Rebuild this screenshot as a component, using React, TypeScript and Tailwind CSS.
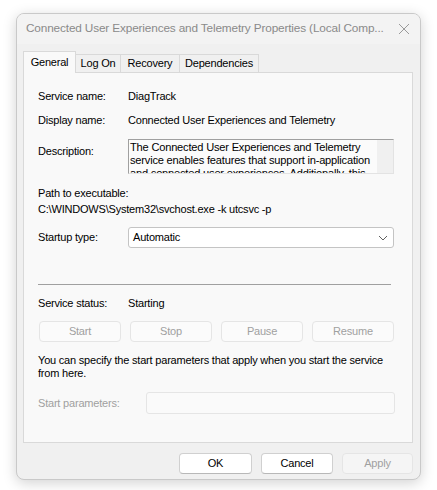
import React from "react";

const font = { fontFamily: '"Liberation Sans", Arial, sans-serif', letterSpacing: "-0.2px" };

function Tab({ label, w, selected }: { label: string; w: string; selected?: boolean }) {
  if (selected) {
    return (
      <div
        className={`${w} h-[22px] mb-[-1px] relative z-10 border border-b-0 border-[#d9d9d9] bg-[#f9f9f9] flex items-center justify-center text-black`}
      >
        {label}
      </div>
    );
  }
  return (
    <div
      className={`${w} h-[18px] border border-b-0 border-l-0 border-[#d9d9d9] bg-[#f0f0f0] flex items-center justify-center text-black`}
    >
      {label}
    </div>
  );
}

function SmallBtn({ label }: { label: string }) {
  return (
    <div className="w-[82px] h-[21px] rounded-[4px] border border-[#e5e5e5] bg-[#fbfbfb] flex items-center justify-center text-[#a0a0a0]">
      {label}
    </div>
  );
}

export default function App() {
  return (
    <div className="w-[437px] h-[490px] bg-white pt-[13px] pl-[16px] text-[11px] text-black" style={font}>
      <div className="w-[405px] h-[467px] rounded-[8px] border border-[#c9c9c9] bg-[#f0f0f0] shadow-[0_3px_14px_rgba(0,0,0,0.18)] flex flex-col overflow-hidden">
        {/* Title bar */}
        <div className="h-[30px] bg-[#f3f3f3] flex items-center pl-[9px] pr-[10px] shrink-0">
          <div className="flex-1 text-[11.8px] text-[#8a8a8a] whitespace-nowrap" style={{ letterSpacing: "-0.15px" }}>
            Connected User Experiences and Telemetry Properties (Local Comp...
          </div>
          <svg width="12" height="12" viewBox="0 0 12 12" className="ml-[4px] shrink-0">
            <path d="M1 1 L11 11 M11 1 L1 11" stroke="#9a9a9a" strokeWidth="1" fill="none" />
          </svg>
        </div>

        {/* Tabs */}
        <div className="pl-[6px] pt-[6px] flex items-end h-[28px] shrink-0">
          <Tab label="General" w="w-[53px]" selected />
          <Tab label="Log On" w="w-[45px]" />
          <Tab label="Recovery" w="w-[59px]" />
          <Tab label="Dependencies" w="w-[79px]" />
        </div>

        {/* Panel */}
        <div className="ml-[6px] w-[390px] h-[371px] border border-[#d9d9d9] bg-[#f9f9f9] pl-[14px] pr-[18px] flex flex-col shrink-0">
          <div className="mt-[15px] h-[16px] flex items-center">
            <div className="w-[90px]">Service name:</div>
            <div>DiagTrack</div>
          </div>
          <div className="mt-[8px] h-[16px] flex items-center">
            <div className="w-[90px]">Display name:</div>
            <div>Connected User Experiences and Telemetry</div>
          </div>
          <div className="mt-[11px] h-[35px] flex">
            <div className="w-[90px] mt-[4px] h-[16px] flex items-center">Description:</div>
            <div className="flex-1 h-[35px] border-t border-l border-[#a0a0a0] border-r border-b border-r-[#e3e3e3] border-b-[#e3e3e3] bg-[#fbfbfb] flex overflow-hidden">
              <div className="flex-1 pl-[1px] text-[11.1px] leading-[13px] overflow-hidden h-[33px] pt-[1px] whitespace-nowrap" style={{ letterSpacing: "-0.2px" }}>
                The Connected User Experiences and Telemetry
                <br />
                service enables features that support in-application
                <br />
                and connected user experiences. Additionally, this
              </div>
              <div className="w-[16px] h-full bg-[#f0f0f0]" />
            </div>
          </div>
          <div className="mt-[11px] h-[16px] flex items-center">Path to executable:</div>
          <div className="h-[16px] flex items-center">C:\WINDOWS\System32\svchost.exe -k utcsvc -p</div>
          <div className="mt-[10px] h-[21px] flex items-center">
            <div className="w-[90px]">Startup type:</div>
            <div className="flex-1 h-[21px] rounded-[3px] border border-[#c4c4c4] bg-white flex items-center pl-[4px] pr-[5px]">
              <div className="flex-1">Automatic</div>
              <svg width="10" height="6" viewBox="0 0 10 6">
                <path d="M1 1 L5 5 L9 1" stroke="#606060" strokeWidth="1" fill="none" />
              </svg>
            </div>
          </div>
          <div className="mt-[36px] h-px w-[353px] bg-[#a0a0a0]" />
          <div className="mt-[10px] h-[16px] flex items-center">
            <div className="w-[90px]">Service status:</div>
            <div>Starting</div>
          </div>
          <div className="mt-[10px] ml-[1px] flex justify-between">
            <SmallBtn label="Start" />
            <SmallBtn label="Stop" />
            <SmallBtn label="Pause" />
            <SmallBtn label="Resume" />
          </div>
          <div className="mt-[12px] leading-[13px] whitespace-nowrap">
            You can specify the start parameters that apply when you start the service
            <br />
            from here.
          </div>
          <div className="mt-[12px] h-[22px] flex items-center">
            <div className="w-[108px] text-[#a0a0a0]">Start parameters:</div>
            <div className="flex-1 h-[22px] rounded-[3px] border border-[#e5e5e5] bg-[#fafafa] mr-[-1px]" />
          </div>
        </div>

        {/* Bottom buttons */}
        <div className="mt-[10px] flex justify-end pr-[7px] gap-[9px]">
          <div className="w-[73px] h-[21px] rounded-[4px] border border-[#d0d0d0] border-b-[#b8b8b8] bg-white flex items-center justify-center">
            OK
          </div>
          <div className="w-[72px] h-[21px] rounded-[4px] border border-[#d0d0d0] border-b-[#b8b8b8] bg-white flex items-center justify-center">
            Cancel
          </div>
          <div className="w-[71px] h-[21px] rounded-[4px] border border-[#e5e5e5] bg-[#f5f5f5] flex items-center justify-center text-[#a0a0a0]">
            Apply
          </div>
        </div>
      </div>
    </div>
  );
}
